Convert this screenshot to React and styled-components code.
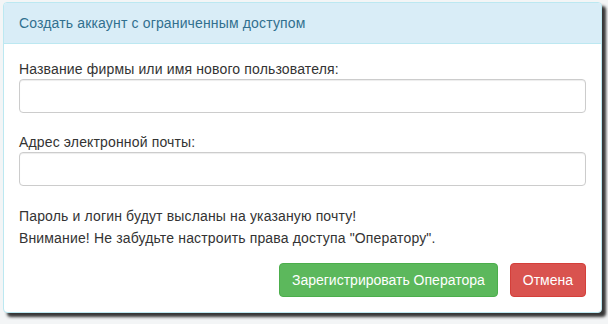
import React from "react";
import styled, { createGlobalStyle } from "styled-components";

const Global = createGlobalStyle`
  html, body { margin: 0; padding: 0; }
  body {
    background: #f3f5f6;
    font-family: "Liberation Sans", Arial, sans-serif;
    font-size: 14px;
    letter-spacing: 0.15px;
    color: #333;
  }
`;

const Page = styled.div`
  padding: 2px 0 0 3px;
  width: 608px;
  height: 324px;
  box-sizing: border-box;
`;

const Panel = styled.div`
  width: 599px;
  box-sizing: border-box;
  background: #fff;
  border: 1px solid #bce8f1;
  border-radius: 4px;
  box-shadow: 4px 4px 3px rgba(20, 20, 20, 0.85);
`;

const Heading = styled.div`
  background: #d9edf7;
  color: #31708f;
  border-bottom: 1px solid #bce8f1;
  border-radius: 3px 3px 0 0;
  padding: 10px 15px;
  line-height: 20px;
  font-size: 14px;
`;

const Body = styled.div`
  padding: 15px;
`;

const Group = styled.div`
  display: flex;
  flex-direction: column;
  margin-bottom: 19px;
`;

const Label = styled.label`
  line-height: 20px;
  margin-bottom: 0;
`;

const Input = styled.input`
  height: 34px;
  box-sizing: border-box;
  border: 1px solid #ccc;
  border-radius: 4px;
  box-shadow: inset 0 1px 1px rgba(0, 0, 0, 0.075);
  padding: 6px 12px;
  font: inherit;
  outline: none;
`;

const Note = styled.p`
  margin: 0 0 14px;
  line-height: 22px;
`;

const Actions = styled.div`
  display: flex;
  justify-content: flex-end;
  gap: 12px;
`;

const Button = styled.button`
  height: 34px;
  padding: 6px 12px;
  font: inherit;
  line-height: 20px;
  color: #fff;
  border-radius: 4px;
  border: 1px solid ${(p) => (p.$variant === "danger" ? "#d43f3a" : "#4cae4c")};
  background: ${(p) => (p.$variant === "danger" ? "#d9534f" : "#5cb85c")};
  cursor: pointer;
`;

export default function App() {
  return (
    <Page>
      <Global />
      <Panel>
        <Heading>Создать аккаунт с ограниченным доступом</Heading>
        <Body>
          <Group>
            <Label>Название фирмы или имя нового пользователя:</Label>
            <Input type="text" />
          </Group>
          <Group>
            <Label>Адрес электронной почты:</Label>
            <Input type="text" />
          </Group>
          <Note>
            Пароль и логин будут высланы на указаную почту!
            <br />
            Внимание! Не забудьте настроить права доступа "Оператору".
          </Note>
          <Actions>
            <Button $variant="success">Зарегистрировать Оператора</Button>
            <Button $variant="danger">Отмена</Button>
          </Actions>
        </Body>
      </Panel>
    </Page>
  );
}
